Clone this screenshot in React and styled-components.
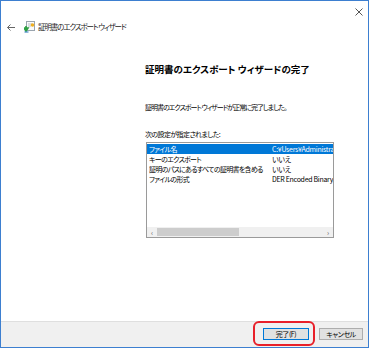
import React from "react";
import styled, { createGlobalStyle } from "styled-components";

const Global = createGlobalStyle`
  html, body { margin: 0; padding: 0; background: #fff; width: 370px; height: 348px; overflow: hidden; }
  #root { width: 370px; height: 348px; }
  * { box-sizing: border-box; }
`;

const FONT = `"Noto Sans CJK JP", "Noto Sans", sans-serif`;

const Window = styled.div`
  width: 369px;
  height: 348px;
  border: 1px solid #3d7fd0;
  background: #fff;
  display: flex;
  flex-direction: column;
  font-family: ${FONT};
  font-feature-settings: "palt";
  color: #000;
`;

const Main = styled.div`
  flex: 1;
  display: flex;
  flex-direction: column;
`;

const TitleBar = styled.div`
  height: 19px;
  display: flex;
  justify-content: flex-end;
  align-items: flex-start;
  padding: 6px 5px 0 0;
`;

const CloseBtn = styled.div`
  width: 9px;
  height: 9px;
  display: flex;
  align-items: center;
  justify-content: center;
`;

const NavRow = styled.div`
  height: 14px;
  display: flex;
  align-items: center;
  padding-left: 6px;
`;

const BackArrow = styled.div`
  width: 9px;
  height: 9px;
  display: flex;
  align-items: center;
  margin-right: 8px;
`;

const WizIcon = styled.div`
  width: 11px;
  height: 12px;
  margin-right: 3px;
  display: flex;
`;

const NavTitle = styled.span`
  font-size: 7.5px;
  letter-spacing: -1.1px;
  line-height: 14px;
  color: #222;
  white-space: nowrap;
`;

const Content = styled.div`
  padding-left: 144px;
  display: flex;
  flex-direction: column;
  align-items: flex-start;
`;

const Heading = styled.h1`
  margin: 28px 0 0 0;
  font-size: 9.5px;
  line-height: 14px;
  font-weight: 700;
  white-space: nowrap;
`;

const Text = styled.p`
  margin: ${(p) => p.$mt}px 0 0 0;
  font-size: 7px;
  letter-spacing: ${(p) => p.$ls}px;
  line-height: 10px;
  white-space: nowrap;
`;

const ListBox = styled.div`
  margin-top: 3px;
  margin-left: 1px;
  width: 188px;
  height: 96px;
  border: 1px solid #9a9a9a;
  display: flex;
  flex-direction: column;
  overflow: hidden;
`;

const Rows = styled.div`
  flex: 1;
  padding-top: 1px;
`;

const Row = styled.div`
  height: 10px;
  display: grid;
  grid-template-columns: 123px 1fr;
  padding-left: 2px;
  font-size: 7px;
  letter-spacing: -0.7px;
  line-height: 10px;
  white-space: nowrap;
  overflow: hidden;
  background: ${(p) => (p.$sel ? "#0078d7" : "transparent")};
  color: ${(p) => (p.$sel ? "#fff" : "#000")};
`;

const Cell = styled.span`
  overflow: hidden;
  letter-spacing: ${(p) => (p.$latin ? "-0.3px" : "inherit")};
`;

const HScroll = styled.div`
  height: 10px;
  background: #f0f0f0;
  display: flex;
  align-items: center;
`;

const ScrollArrow = styled.span`
  width: 10px;
  display: flex;
  justify-content: center;
  font-size: 7px;
  color: #606060;
  line-height: 10px;
`;

const Track = styled.div`
  flex: 1;
  height: 8px;
  display: flex;
`;

const Thumb = styled.div`
  width: 82px;
  height: 8px;
  background: #cdcdcd;
`;

const Footer = styled.div`
  height: 26px;
  background: #f0f0f0;
  border-top: 1px solid #dfdfdf;
  display: flex;
  justify-content: flex-end;
  align-items: flex-start;
  padding: 6px 5px 0 0;
  gap: 10px;
`;

const Highlight = styled.div`
  position: relative;
  display: flex;
  &::after {
    content: "";
    position: absolute;
    left: -10px;
    right: -6px;
    top: -7px;
    bottom: -6px;
    border: 2px solid #e8202a;
    border-radius: 6px;
  }
`;

const Button = styled.button`
  width: ${(p) => p.$w}px;
  height: 12px;
  padding: 0;
  margin: 0;
  background: #e1e1e1;
  border: 1px solid ${(p) => (p.$primary ? "#0078d7" : "#adadad")};
  font-family: ${FONT};
  font-feature-settings: "palt";
  font-size: 7px;
  letter-spacing: -0.4px;
  line-height: 10px;
  color: #000;
`;

export default function App() {
  const rows = [
    ["ファイル名", "C:¥Users¥Administrator"],
    ["キーのエクスポート", "いいえ"],
    ["証明のパスにあるすべての証明書を含める", "いいえ"],
    ["ファイルの形式", "DER Encoded Binary X.509 (.CER)"],
  ];
  return (
    <>
      <Global />
      <Window>
        <Main>
          <TitleBar>
            <CloseBtn>
              <svg width="8" height="8" viewBox="0 0 8 8">
                <path d="M0.5 0.5 L7.5 7.5 M7.5 0.5 L0.5 7.5" stroke="#555" strokeWidth="1" />
              </svg>
            </CloseBtn>
          </TitleBar>
          <NavRow>
            <BackArrow>
              <svg width="8" height="7" viewBox="0 0 8 7">
                <path d="M0.5 3.5 H8 M3.5 0.5 L0.5 3.5 L3.5 6.5" stroke="#666" strokeWidth="1" fill="none" />
              </svg>
            </BackArrow>
            <WizIcon>
              <svg width="11" height="12" viewBox="0 0 11 12">
                <rect x="2.5" y="0.5" width="8" height="9" fill="#fafafa" stroke="#9aa4ae" />
                <path d="M4 3 H8 M4 5 H7" stroke="#b8c0c8" />
                <circle cx="8.5" cy="4" r="1.8" fill="#f0b020" />
                <path d="M2 5 V8 M0 7 L2 10 L4 7 Z" stroke="#2ea043" strokeWidth="1.6" fill="#2ea043" />
                <rect x="0.5" y="10.5" width="4" height="1" fill="#2070c0" />
              </svg>
            </WizIcon>
            <NavTitle>証明書のエクスポート ウィザード</NavTitle>
          </NavRow>
          <Content>
            <Heading>証明書のエクスポート ウィザードの完了</Heading>
            <Text $mt={26} $ls={-1}>証明書のエクスポート ウィザードが正常に完了しました。</Text>
            <Text $mt={17} $ls={-0.6}>次の設定が指定されました:</Text>
            <ListBox>
              <Rows>
                {rows.map((r, i) => (
                  <Row key={i} $sel={i === 0}>
                    <Cell>{r[0]}</Cell>
                    <Cell $latin>{r[1]}</Cell>
                  </Row>
                ))}
              </Rows>
              <HScroll>
                <ScrollArrow>&lsaquo;</ScrollArrow>
                <Track>
                  <Thumb />
                </Track>
                <ScrollArrow>&rsaquo;</ScrollArrow>
              </HScroll>
            </ListBox>
          </Content>
        </Main>
        <Footer>
          <Highlight>
            <Button $primary $w={46}>完了(F)</Button>
          </Highlight>
          <Button $w={44}>キャンセル</Button>
        </Footer>
      </Window>
    </>
  );
}
